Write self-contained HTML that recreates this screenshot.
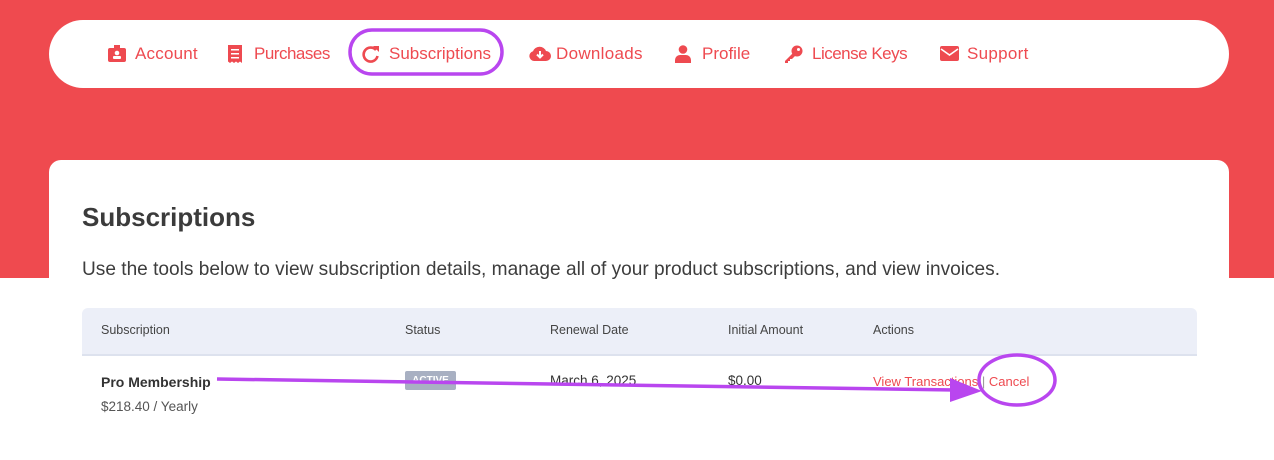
<!DOCTYPE html>
<html><head><meta charset="utf-8"><style>
*{margin:0;padding:0;box-sizing:border-box}
body{width:1274px;height:428px;overflow:hidden;background:#fff;font-family:"Liberation Sans",sans-serif;position:relative}
.red{position:absolute;left:0;top:0;width:1274px;height:278px;background:#ef4a4f}
.nav{position:absolute;left:49px;top:20px;width:1180px;height:68px;background:#fff;border-radius:34px}
.ni{position:absolute;top:44px;font-size:17px;color:#ee4a50;white-space:nowrap;line-height:20px}
.ni svg{position:absolute;left:-27px;top:1px}
.card{position:absolute;left:49px;top:160px;width:1180px;height:300px;background:#fff;border-radius:12px}
h1{position:absolute;left:82px;top:202px;font-size:26px;font-weight:bold;color:#3b3b3b}
.desc{position:absolute;left:82px;top:259px;font-size:19.1px;color:#3d3d3d;white-space:nowrap}
.th{position:absolute;left:82px;top:308px;width:1115px;height:48px;background:#eceff8;border-radius:6px 6px 0 0;border-bottom:2px solid #dde2ee}
.h{position:absolute;top:323px;font-size:12.5px;color:#444}
.c{position:absolute;font-size:13.5px;color:#333}
</style></head><body>
<div class="red"></div>
<div class="nav"></div>
<div class="ni" style="left:135px;letter-spacing:0.2px"><svg width="18" height="18" viewBox="0 0 18 18"><rect x="0" y="3" width="18" height="14" rx="2" fill="#ee4a50"/><rect x="6" y="0" width="6" height="5" fill="#ee4a50"/><circle cx="9" cy="8" r="2.3" fill="#fff"/><rect x="5" y="11" width="8" height="3" rx="1" fill="#fff"/></svg>Account</div>
<div class="ni" style="left:254px;letter-spacing:-0.5px"><svg width="16" height="18" viewBox="0 0 16 18"><path d="M1 0h14v18l-2-1.5-2 1.5-2-1.5-2 1.5-2-1.5-2 1.5-2-1.5z" fill="#ee4a50"/><rect x="4" y="4" width="8" height="1.5" fill="#fff"/><rect x="4" y="8" width="8" height="1.5" fill="#fff"/><rect x="4" y="12" width="8" height="1.5" fill="#fff"/></svg>Purchases</div>
<div class="ni" style="left:389px"><svg width="18" height="18" viewBox="0 0 18 18"><path d="M14 5A7 7 0 1 0 15.5 11" stroke="#ee4a50" stroke-width="2.6" fill="none"/><path d="M11 1h6v6z" fill="#ee4a50"/></svg>Subscriptions</div>
<div class="ni" style="left:556px;letter-spacing:0.3px"><svg width="22" height="18" viewBox="0 0 22 18"><path d="M5 16a5 5 0 0 1-1-9.8A7 7 0 0 1 17 6a5 5 0 0 1 0 10z" fill="#ee4a50"/><path d="M11 6v6M8 9.5l3 3 3-3" stroke="#fff" stroke-width="2" fill="none"/></svg>Downloads</div>
<div class="ni" style="left:702px"><svg width="16" height="18" viewBox="0 0 16 18"><circle cx="8" cy="4.5" r="4.3" fill="#ee4a50"/><path d="M0 18v-3a5 5 0 0 1 5-5h6a5 5 0 0 1 5 5v3z" fill="#ee4a50"/></svg>Profile</div>
<div class="ni" style="left:812px;letter-spacing:-0.5px"><svg width="18" height="18" viewBox="0 0 18 18"><circle cx="12" cy="6" r="5.5" fill="#ee4a50"/><circle cx="13.5" cy="4.5" r="1.5" fill="#fff"/><path d="M8 8L0 16v2h3v-2h2v-2h2l3-3z" fill="#ee4a50"/></svg>License Keys</div>
<div class="ni" style="left:967px;letter-spacing:0.3px"><svg width="19" height="16" viewBox="0 0 19 16" style="top:2px"><rect x="0" y="0" width="19" height="15" rx="2" fill="#ee4a50"/><path d="M1 3l8.5 6 8.5-6" stroke="#fff" stroke-width="1.6" fill="none"/></svg>Support</div>
<div class="card"></div>
<h1>Subscriptions</h1>
<div class="desc">Use the tools below to view subscription details, manage all of your product subscriptions, and view invoices.</div>
<div class="th"></div>
<div class="h" style="left:101px">Subscription</div>
<div class="h" style="left:405px">Status</div>
<div class="h" style="left:550px">Renewal Date</div>
<div class="h" style="left:728px">Initial Amount</div>
<div class="h" style="left:873px">Actions</div>
<div class="c" style="left:101px;top:374px;font-weight:bold;font-size:14px;color:#333">Pro Membership</div>
<div class="c" style="left:101px;top:399px;color:#555">$218.40 / Yearly</div>
<div style="position:absolute;left:405px;top:371px;width:51px;height:19px;background:#a8b0c2;border-radius:2px;color:#fff;font-size:10px;font-weight:bold;text-align:center;line-height:19px">ACTIVE</div>
<div class="c" style="left:550px;top:373px">March 6, 2025</div>
<div class="c" style="left:728px;top:373px">$0.00</div>
<div class="c" style="left:873px;top:374px;font-size:13px;color:#ee4a50">View Transactions <span style="color:#999">|</span> Cancel</div>
<svg width="1274" height="428" style="position:absolute;left:0;top:0">
<rect x="350" y="30" width="152" height="44" rx="22" fill="none" stroke="#b946ef" stroke-width="3.5"/>
<ellipse cx="1017" cy="380" rx="38" ry="25" fill="none" stroke="#b946ef" stroke-width="3.5"/>
<path d="M217 379L955 390" stroke="#b946ef" stroke-width="3.5"/>
<path d="M950 378L982 391L950 402z" fill="#b946ef"/>
</svg>
</body></html>
